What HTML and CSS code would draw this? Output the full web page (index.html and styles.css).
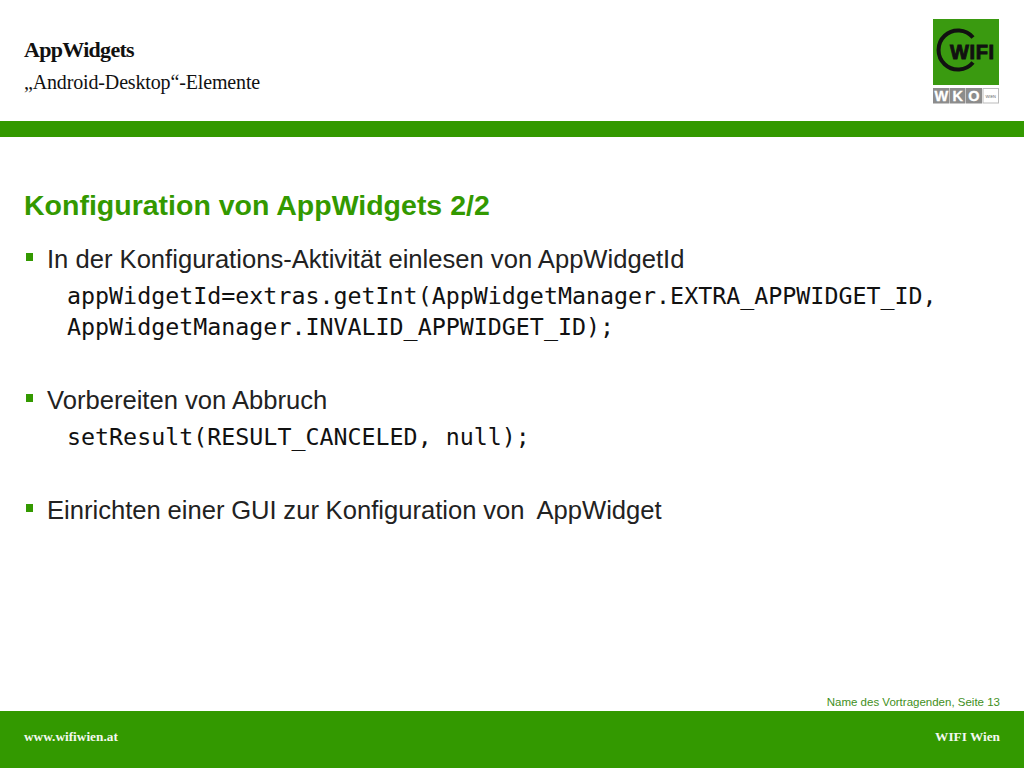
FILE: index.html
```html
<!DOCTYPE html>
<html lang="de">
<head>
<meta charset="utf-8">
<title>AppWidgets</title>
<link rel="stylesheet" href="styles.css">
</head>
<body>
<div class="slide">
  <header class="header">
    <div class="titles">
      <div class="deck">AppWidgets</div>
      <div class="subdeck">„Android-Desktop“-Elemente</div>
    </div>
    <div class="logo">
      <svg class="logo-svg" width="66" height="86" viewBox="0 0 66 86">
        <rect x="0" y="0" width="66" height="66" fill="#3a9a10"/>
        <path d="M40 18.500 A19.500 19.500 0 1 0 40 43.500" fill="none" stroke="#111" stroke-width="4"/>
        <text class="logo-wifi" x="17" y="40">WIFI</text>
        <rect x="0" y="69" width="16.500" height="15.500" fill="#8c8c8c"/>
        <rect x="17" y="69" width="15.500" height="15.500" fill="#8c8c8c"/>
        <rect x="33" y="69" width="16" height="15.500" fill="#8c8c8c"/>
        <rect x="50" y="69.500" width="15.500" height="14.500" fill="#fff" stroke="#bbb" stroke-width="1"/>
        <text class="logo-wko" x="8.300" y="82">W</text>
        <text class="logo-wko" x="24.800" y="82">K</text>
        <text class="logo-wko" x="41" y="82">O</text>
        <text class="logo-wien" x="57.800" y="78.500">WIEN</text>
      </svg>
    </div>
  </header>
  <div class="band"></div>
  <main class="content">
    <h1 class="heading">Konfiguration von AppWidgets 2/2</h1>
    <ul class="points">
      <li class="point">
        <div class="point-text">In der Konfigurations-Aktivität einlesen von AppWidgetId</div>
        <div class="code">appWidgetId=extras.getInt(AppWidgetManager.EXTRA_APPWIDGET_ID,<br>AppWidgetManager.INVALID_APPWIDGET_ID);</div>
      </li>
      <li class="point">
        <div class="point-text">Vorbereiten von Abbruch</div>
        <div class="code">setResult(RESULT_CANCELED, null);</div>
      </li>
      <li class="point">
        <div class="point-text point-text-tight">Einrichten einer GUI zur Konfiguration von&nbsp; AppWidget</div>
      </li>
    </ul>
  </main>
  <div class="presenter">Name des Vortragenden, Seite 13</div>
  <footer class="footer">
    <span>www.wifiwien.at</span>
    <span>WIFI Wien</span>
  </footer>
</div>
</body>
</html>
```
FILE: styles.css
```css
html, body {
  margin: 0;
  padding: 0;
  background: #fff;
}
.slide {
  width: 1024px;
  height: 768px;
  display: flex;
  flex-direction: column;
  overflow: hidden;
  font-family: "Liberation Sans", Arial, sans-serif;
}
.header {
  height: 121px;
  box-sizing: border-box;
  padding: 19px 25px 0 24px;
  display: flex;
  justify-content: space-between;
  align-items: flex-start;
}
.titles {
  margin-top: 18px;
  font-family: "Liberation Serif", "Times New Roman", serif;
  color: #111;
}
.deck {
  font-size: 22px;
  line-height: 25px;
  font-weight: bold;
  letter-spacing: -0.7px;
}
.subdeck {
  font-size: 20px;
  line-height: 25px;
  margin-top: 8px;
  letter-spacing: -0.15px;
}
.logo-svg {
  display: block;
}
.logo-wifi {
  font-family: "Liberation Sans", Arial, sans-serif;
  font-weight: bold;
  font-size: 20px;
  letter-spacing: 0.6px;
  fill: #111;
  stroke: #111;
  stroke-width: 0.9px;
}
.logo-wko {
  font-family: "Liberation Sans", Arial, sans-serif;
  font-weight: bold;
  font-size: 14.500px;
  fill: #fff;
  stroke: #fff;
  stroke-width: 0.3px;
  text-anchor: middle;
}
.logo-wien {
  font-family: "Liberation Sans", Arial, sans-serif;
  font-size: 4px;
  fill: #666;
  text-anchor: middle;
}
.band {
  height: 16px;
  background: #339900;
}
.content {
  flex: 1;
  padding: 0 24px;
  min-height: 0;
}
.heading {
  margin: 53px 0 0;
  font-size: 28.5px;
  line-height: 30px;
  font-weight: bold;
  color: #339900;
}
.points {
  list-style: none;
  margin: 25px 0 0;
  padding: 0;
}
.point {
  position: relative;
  padding-left: 23px;
  margin-bottom: 44px;
}
.point::before {
  content: "";
  position: absolute;
  left: 2px;
  top: 8px;
  width: 7px;
  height: 8px;
  background: #339900;
}
.point-text {
  font-size: 25.6px;
  line-height: 28px;
  color: #222;
}
.point-text-tight {
  word-spacing: -0.4px;
}
.code {
  margin-top: 7px;
  padding-left: 20px;
  font-family: "DejaVu Sans Mono", "Liberation Mono", monospace;
  font-size: 23.3px;
  line-height: 31px;
  color: #111;
}
.presenter {
  height: 24px;
  box-sizing: border-box;
  padding: 9px 24px 0 0;
  text-align: right;
  font-size: 11.5px;
  line-height: 13px;
  color: #3f8f22;
}
.footer {
  height: 57px;
  box-sizing: border-box;
  background: #339900;
  padding: 17px 24px 0;
  display: flex;
  justify-content: space-between;
  font-family: "Liberation Serif", "Times New Roman", serif;
  font-size: 13.300px;
  line-height: 18px;
  font-weight: bold;
  color: #f4f8f0;
}
```
